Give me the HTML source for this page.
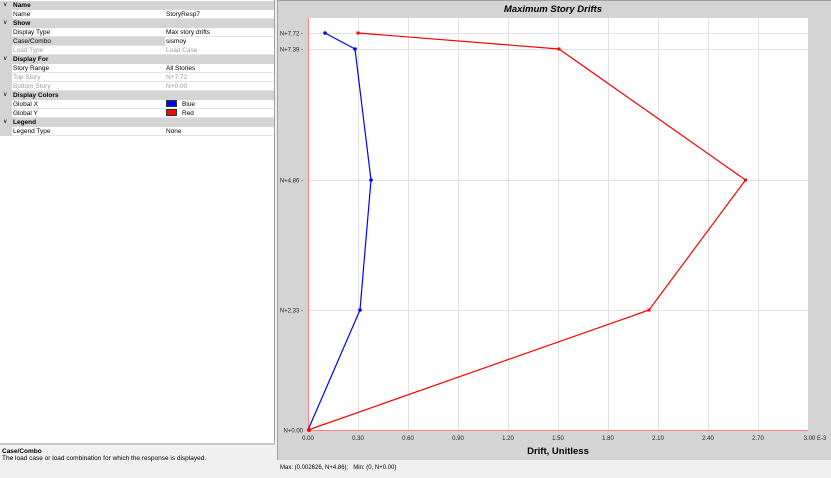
<!DOCTYPE html>
<html><head><meta charset="utf-8"><style>
*{margin:0;padding:0;box-sizing:border-box}
body{width:831px;height:478px;overflow:hidden;background:#f0f0f0;font-family:"Liberation Sans",Arial,sans-serif;position:relative}
.left{position:absolute;left:0;top:0;width:275px;height:478px;background:#fff;border-right:1px solid #a0a0a0}
.row{position:absolute;left:0;width:274px;height:9px;font-size:6.5px;line-height:9px}
.hdr{background:#d4d4d4;font-weight:bold}
.hdr .t{position:absolute;left:13px}
.hdr .c{position:absolute;left:3px;font-weight:normal;font-size:6px}
.it{background:#fff;border-bottom:1px solid #e4e4e4}
.it .g{position:absolute;left:0;top:0;width:12px;height:9px;background:#d4d4d4}
.it .k{position:absolute;left:13px}
.it .v{position:absolute;left:166px}
.sel{background:#d4d4d4}
.dis{color:#9a9a9a}
.help{position:absolute;left:0;top:443px;width:275px;height:35px;background:#f0f0f0;border-top:2px solid #c8c8c8;font-size:6.5px;padding:3px 2px}
.chart{position:absolute;left:277px;top:0;width:554px;height:460px;background:#d4d4d4;border-left:1px solid #a0a0a0;border-top:1px solid #a0a0a0}
.status{position:absolute;left:277px;top:460px;width:554px;height:18px;background:#f0f0f0;font-size:6px;padding:5px 3px}
</style></head><body>
<div class="left">
<div class="row hdr" style="top:1px"><span class="c">∨</span><span class="t">Name</span></div>
<div class="row it" style="top:10px"><div class="g"></div><span class="k">Name</span><span class="v">StoryResp7</span></div>
<div class="row hdr" style="top:19px"><span class="c">∨</span><span class="t">Show</span></div>
<div class="row it" style="top:28px"><div class="g"></div><span class="k">Display Type</span><span class="v">Max story drifts</span></div>
<div class="row it sel" style="top:37px"><div class="g"></div><span class="k">Case/Combo</span><span class="v" style="background:#fff;left:165px;width:109px;padding-left:1px">sismoy</span></div>
<div class="row it dis" style="top:46px"><div class="g"></div><span class="k">Load Type</span><span class="v">Load Case</span></div>
<div class="row hdr" style="top:55px"><span class="c">∨</span><span class="t">Display For</span></div>
<div class="row it" style="top:64px"><div class="g"></div><span class="k">Story Range</span><span class="v">All Stories</span></div>
<div class="row it dis" style="top:73px"><div class="g"></div><span class="k">Top Story</span><span class="v">N+7.72</span></div>
<div class="row it dis" style="top:82px"><div class="g"></div><span class="k">Bottom Story</span><span class="v">N+0.00</span></div>
<div class="row hdr" style="top:91px"><span class="c">∨</span><span class="t">Display Colors</span></div>
<div class="row it" style="top:100px"><div class="g"></div><span class="k">Global X</span><span class="v"><span style="display:inline-block;width:11px;height:7px;background:#0000ff;border:1px solid #333;vertical-align:-1px;margin-right:5px"></span>Blue</span></div>
<div class="row it" style="top:109px"><div class="g"></div><span class="k">Global Y</span><span class="v"><span style="display:inline-block;width:11px;height:7px;background:#ff0000;border:1px solid #333;vertical-align:-1px;margin-right:5px"></span>Red</span></div>
<div class="row hdr" style="top:118px"><span class="c">∨</span><span class="t">Legend</span></div>
<div class="row it" style="top:127px"><div class="g"></div><span class="k">Legend Type</span><span class="v">None</span></div>
<div class="help"><b>Case/Combo</b><br>The load case or load combination for which the response is displayed.</div>
</div>
<div class="chart"></div>
<svg style="position:absolute;left:0;top:0" width="831" height="478" font-family="Liberation Sans,Arial,sans-serif">
<text x="553" y="12" font-size="9.5" font-weight="bold" font-style="italic" text-anchor="middle">Maximum Story Drifts</text>
<rect x="308" y="18" width="500" height="412" fill="#fff"/>
<g stroke="#e2e2e2" stroke-width="1">
<line x1="358.5" y1="18" x2="358.5" y2="430"/><line x1="408.5" y1="18" x2="408.5" y2="430"/><line x1="458.5" y1="18" x2="458.5" y2="430"/><line x1="508.5" y1="18" x2="508.5" y2="430"/><line x1="558.5" y1="18" x2="558.5" y2="430"/><line x1="608.5" y1="18" x2="608.5" y2="430"/><line x1="658.5" y1="18" x2="658.5" y2="430"/><line x1="708.5" y1="18" x2="708.5" y2="430"/><line x1="758.5" y1="18" x2="758.5" y2="430"/>
<line x1="308" y1="33.5" x2="808" y2="33.5"/><line x1="308" y1="49.5" x2="808" y2="49.5"/><line x1="308" y1="180.5" x2="808" y2="180.5"/><line x1="308" y1="310.5" x2="808" y2="310.5"/>
</g>
<line x1="308.5" y1="18" x2="308.5" y2="430" stroke="#ff8080"/>
<line x1="308" y1="430.5" x2="808" y2="430.5" stroke="#ff8080"/>
<g font-size="6" fill="#222" text-anchor="end">
<text x="303" y="35.5">N+7.72 -</text><text x="303" y="51.5">N+7.39 -</text><text x="303" y="182.5">N+4.86 -</text><text x="303" y="312.5">N+2.33 -</text><text x="303" y="432.5">N+0.00</text>
</g>
<g font-size="6" fill="#222" text-anchor="middle">
<text x="308" y="440">0.00</text><text x="358" y="440">0.30</text><text x="408" y="440">0.60</text><text x="458" y="440">0.90</text><text x="508" y="440">1.20</text><text x="558" y="440">1.50</text><text x="608" y="440">1.80</text><text x="658" y="440">2.10</text><text x="708" y="440">2.40</text><text x="758" y="440">2.70</text><text x="815" y="440">3.00 E-3</text>
</g>
<text x="558" y="454" font-size="9.5" font-weight="bold" text-anchor="middle">Drift, Unitless</text>
<polyline points="358,33 559,49 745.5,180 649,310 308,430" fill="none" stroke="#ff0000" stroke-width="1.2"/>
<polyline points="325,33 355,49 371,180 360,310 308,430" fill="none" stroke="#0000ff" stroke-width="1.2"/>
<g fill="#ff0000"><rect x="356.5" y="31.5" width="3" height="3"/><rect x="557.5" y="47.5" width="3" height="3"/><rect x="744" y="178.5" width="3" height="3"/><rect x="647.5" y="308.5" width="3" height="3"/></g>
<g fill="#0000ff"><circle cx="325" cy="33" r="1.8"/><circle cx="355" cy="49" r="1.8"/><circle cx="371" cy="180" r="1.8"/><circle cx="360" cy="310" r="1.8"/></g>
<circle cx="309" cy="430" r="2" fill="#ff0000"/>
</svg>
<div class="status">Max: (0.002626, N+4.86);&nbsp;&nbsp; Min: (0, N+0.00)</div>
</body></html>
